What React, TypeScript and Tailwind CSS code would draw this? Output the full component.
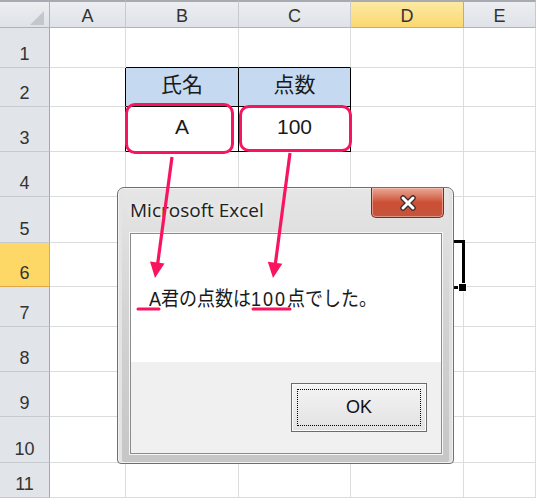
import React from 'react';

const ROW_H = ['h-[40px]', 'h-[39px]', 'h-[45px]', 'h-[45px]', 'h-[46px]', 'h-[44px]', 'h-[40px]', 'h-[45px]', 'h-[45px]', 'h-[46px]', 'h-[35px]'];

function ColHeader({ label, selected }: { label: string; selected?: boolean }) {
  return (
    <div
      className={
        selected
          ? 'h-[28px] flex items-center justify-center pt-[3px] border-t-2 border-t-[#a7abb1] border-r border-r-[#e3a646] border-b border-b-[#e3a646] bg-gradient-to-b from-[#fde9a3] to-[#fbd86f] text-[18px] text-[#333]'
          : 'h-[28px] flex items-center justify-center pt-[3px] border-t-2 border-t-[#a7abb1] border-r border-r-[#c6cad0] border-b border-b-[#aeb3ba] bg-gradient-to-b from-[#eceef1] to-[#dfe2e7] text-[18px] text-[#333]'
      }
    >
      {label}
    </div>
  );
}

function RowHeader({ n, h }: { n: number; h: string }) {
  return (
    <div
      className={
        n === 6
          ? h + ' flex items-end justify-center pb-[4px] leading-none border-r border-r-[#e3a646] border-b border-b-[#e3a646] bg-[#fdd867] text-[18px] text-[#333]'
          : h + ' flex items-end justify-center pb-[4px] leading-none border-r border-r-[#a3a8af] border-b border-b-[#c6cad0] bg-[#e1e4e9] text-[18px] text-[#333]'
      }
    >
      {n}
    </div>
  );
}

function Cell({ cls, children }: { cls: string; children?: React.ReactNode }) {
  return <div className={'flex items-center justify-center ' + cls}>{children}</div>;
}

const G = 'border-r border-b border-r-[#dadcdd] border-b-[#dadcdd]';

export default function App() {
  const rows = [1, 2, 3, 4, 5, 6, 7, 8, 9, 10, 11];
  return (
    <div className="relative w-[536px] h-[498px] overflow-hidden bg-white font-['Liberation_Sans','Noto_Sans_CJK_JP',sans-serif] text-[#222]">
      <div className="grid grid-cols-[50px_76px_113px_112px_113px_72px]">
        {/* header row */}
        <div className="relative h-[28px] border-t-2 border-t-[#a7abb1] border-r border-r-[#aeb3ba] border-b border-b-[#aeb3ba] bg-gradient-to-b from-[#eceef1] to-[#dfe2e7]">
          <svg className="absolute left-[30px] top-[9px]" width="14" height="14" viewBox="0 0 14 14">
            <polygon points="14,0 14,14 0,14" fill="#c3c7cd" />
          </svg>
        </div>
        <ColHeader label="A" />
        <ColHeader label="B" />
        <ColHeader label="C" />
        <ColHeader label="D" selected />
        <ColHeader label="E" />

        {rows.map((r, i) => (
          <React.Fragment key={r}>
            <RowHeader n={r} h={ROW_H[i]} />
            {/* A */}
            <Cell
              cls={
                r === 2 || r === 3
                  ? 'border-r border-b border-r-black border-b-[#dadcdd]'
                  : G
              }
            />
            {/* B */}
            {r === 1 ? (
              <Cell cls="border-r border-b border-r-[#dadcdd] border-b-black" />
            ) : r === 2 ? (
              <Cell cls="border-r border-b border-r-black border-b-black bg-[#c5d9f1] text-[21px] text-[#1a1a1a] pb-[5px]">氏名</Cell>
            ) : r === 3 ? (
              <Cell cls="border-r border-b border-r-black border-b-black text-[21px] text-[#1a1a1a] pb-[4px]">A</Cell>
            ) : (
              <Cell cls={G} />
            )}
            {/* C */}
            {r === 1 ? (
              <Cell cls="border-r border-b border-r-[#dadcdd] border-b-black" />
            ) : r === 2 ? (
              <Cell cls="border-r border-b border-r-black border-b-black bg-[#c5d9f1] text-[21px] text-[#1a1a1a] pb-[5px]">点数</Cell>
            ) : r === 3 ? (
              <Cell cls="border-r border-b border-r-black border-b-black text-[21px] text-[#1a1a1a] pb-[4px]">100</Cell>
            ) : (
              <Cell cls={G} />
            )}
            {/* D */}
            <Cell cls={G} />
            {/* E */}
            <Cell cls={G} />
          </React.Fragment>
        ))}
      </div>

      {/* selected cell D6 */}
      <div className="absolute left-[349px] top-[240px] w-[116px] h-[49px] border-[3px] border-black" />
      <div className="absolute left-[458px] top-[283px] w-[9px] h-[9px] bg-black border border-white" />

      {/* pink callout boxes */}
      <div className="absolute left-[125px] top-[103px] w-[109px] h-[51px] rounded-[10px] border-[3px] border-[#f8145f]" />
      <div className="absolute left-[239px] top-[105px] w-[113px] h-[47px] rounded-[10px] border-[3px] border-[#f8145f]" />

      {/* message box window */}
      <div className="absolute left-[117px] top-[187px] w-[337px] h-[277px] flex flex-col rounded-t-[7px] rounded-b-[4px] border border-[#6f6f6f] bg-gradient-to-b from-[#e6e6e6] via-[#d2d2d2] to-[#c6c6c6] shadow-[inset_0_0_0_1px_#f2f2f2,inset_3px_0_0_1px_#e4e4e4,inset_-3px_0_0_1px_#e0e0e0]">
        <div className="h-[45px] flex items-start justify-between">
          <div className="pl-[12px] pt-[11px] text-[19px] leading-[22px] text-[#222] font-['Open_Sans','Noto_Sans',sans-serif] [text-shadow:0_0_6px_#ffffff]">
            Microsoft Excel
          </div>
          <div className="mr-[9px] w-[73px] h-[30px] flex items-center justify-center rounded-b-[5px] border border-t-0 border-[#6e3326] bg-gradient-to-b from-[#e9a995] via-[#cc4f36] to-[#c3553c] shadow-[inset_0_0_0_1px_rgba(255,210,200,0.5)]">
            <svg width="18" height="16" viewBox="0 0 18 16">
              <path d="M4 3 L14 13 M14 3 L4 13" stroke="#3d2a27" strokeWidth="5.5" strokeLinecap="round" />
              <path d="M4 3 L14 13 M14 3 L4 13" stroke="#ffffff" strokeWidth="3" strokeLinecap="round" />
            </svg>
          </div>
        </div>
        <div className="ml-[12px] mr-[11px] mb-[9px] flex-1 flex flex-col border border-[#8c8c8c] shadow-[0_0_0_1px_#f6f6f6]">
          <div className="h-[128px] bg-white pl-[18px] pt-[55px]">
            <div className="origin-bottom scale-y-[1.15] text-[18px] leading-[24px] text-[#1a1a1a] font-['Liberation_Sans','Noto_Sans_CJK_JP',sans-serif] whitespace-nowrap">
              A君の点数は<span className="tracking-[2px]">100</span>点でした。
            </div>
          </div>
          <div className="flex-1 bg-[#f0f0f0] flex justify-end items-start pt-[21px] pr-[14px]">
            <div className="w-[136px] h-[49px] p-[1px] border border-[#6c6c6c] bg-gradient-to-b from-[#f4f4f4] to-[#e2e2e2] shadow-[inset_0_0_0_1px_#fbfbfb]">
              <div className="m-[4px] h-[37px] border border-dotted border-black flex items-center justify-center text-[18px] text-[#111] font-['Liberation_Sans',sans-serif]">
                OK
              </div>
            </div>
          </div>
        </div>
      </div>

      {/* arrows and underlines */}
      <svg className="absolute left-0 top-0 pointer-events-none" width="536" height="498" viewBox="0 0 536 498">
        <line x1="172" y1="157" x2="157.5" y2="265" stroke="#f8145f" strokeWidth="3.2" />
        <polygon points="155,278 164.5,263.5 150,261.5" fill="#f8145f" />
        <line x1="290" y1="153" x2="275.2" y2="265" stroke="#f8145f" strokeWidth="3.2" />
        <polygon points="273,278 282.3,263.8 267.8,261.8" fill="#f8145f" />
        <line x1="138" y1="309" x2="159" y2="309" stroke="#f8145f" strokeWidth="3" strokeLinecap="round" />
        <line x1="253" y1="309" x2="290" y2="309" stroke="#f8145f" strokeWidth="3" strokeLinecap="round" />
      </svg>
    </div>
  );
}
